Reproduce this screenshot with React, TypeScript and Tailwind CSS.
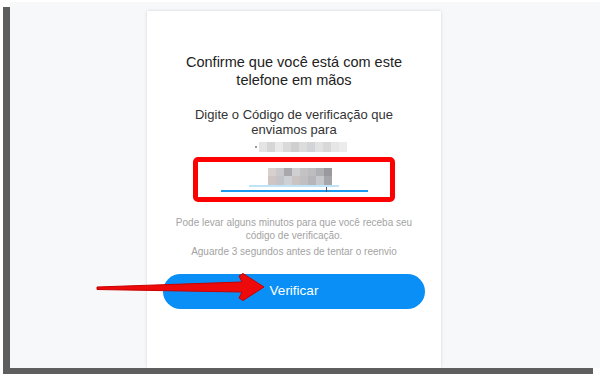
const phoneShades = ["#e4e4e4", "#d6d6d6", "#e9e9e9", "#dadada", "#cfcfcf", "#dcdcdc", "#d2d4d8", "#e2e2e2", "#d8d8d8", "#e6e6e6", "#ececec"];
const codeTop = ["#d8cfcf", "#c9c9cc", "#a9a9ad", "#cfcfd2", "#c3c3c6", "#bdbdc0", "#aeb0b4", "#9a9a9e"];
const codeBottom = ["#cfc6c4", "#c4c4c8", "#cdd0d4", "#c9c3c1", "#c0c0c3", "#b6b6ba", "#c6c8cc", "#a5a6aa"];

const Pixels = ({ shades, size }: { shades: string[]; size: string }) => (
  <div className="flex">
    {shades.map((c, i) => (
      <div key={i} className={size} style={{ backgroundColor: c }} />
    ))}
  </div>
);

export default function App() {
  return (
    <div className="relative w-[600px] h-[374px] bg-white flex flex-col font-['Liberation_Sans',Arial,sans-serif] overflow-hidden">
      <div className="flex-1 flex pt-[2px]">
        <div className="w-[3px]" />
        <div className="w-[7px] mt-[5px] bg-[#5e5e5e]" />
        <div className="flex-1 bg-[#f7f8fa] flex">
          <div className="ml-[137px] mt-[9px] w-[294px] bg-white shadow-[0_0_3px_rgba(0,0,0,0.15)] flex flex-col items-center">
            <div className="mt-[42px] text-[14.5px] leading-[18px] text-[#222] text-center">
              Confirme que você está com este
              <br />
              telefone em mãos
            </div>
            <div className="mt-[18px] text-[13px] leading-[15px] text-[#333] text-center">
              Digite o Código de verificação que
              <br />
              enviamos para
            </div>
            <div className="mt-[5px] ml-[14px] flex items-center">
              <div className="w-[2px] h-[2px] bg-[#999] mr-[2px]" />
              <Pixels shades={phoneShades} size="w-[8px] h-[10px]" />
            </div>
            <div className="mt-[5px] w-[202px] h-[45px] border-[5px] border-[#ff0000] rounded-[5px] flex flex-col items-center">
              <div className="mt-[6px] ml-[12px] flex flex-col">
                <Pixels shades={codeTop} size="w-[8px] h-[8px]" />
                <Pixels shades={codeBottom} size="w-[8px] h-[9px]" />
              </div>
              <div className="w-[90px] h-[2px] bg-[#bfe3f8]" />
              <div className="relative mt-[3px] w-[147px] h-[2px] bg-[#1a9bf0]">
                <div className="absolute left-[105px] -top-[3px] w-[1px] h-[5px] bg-[#555]" />
              </div>
            </div>
            <div className="mt-[14px] text-[10px] leading-[13px] text-[#a3a3a3] text-center">
              Pode levar alguns minutos para que você receba seu
              <br />
              código de verificação.
            </div>
            <div className="mt-[3px] text-[10px] leading-[13px] text-[#a3a3a3] text-center">
              Aguarde 3 segundos antes de tentar o reenvio
            </div>
            <button className="mt-[16px] w-[262px] h-[35px] rounded-full bg-[#0a8ff7] text-white text-[13.5px] flex items-center justify-center">
              Verificar
            </button>
          </div>
        </div>
      </div>
      <div className="h-[6px] ml-[3px] mr-[7px] bg-[#5e5e5e]" />
      <svg className="absolute left-0 top-0" width="600" height="374" viewBox="0 0 600 374">
        <polygon
          points="97,287 97,289.5 242,292 239,298 243,300.5 264,287 243,273.5 239,276 242,282"
          fill="#ee0a0a"
          stroke="#c80000"
          strokeWidth="1"
          strokeLinejoin="round"
        />
      </svg>
    </div>
  );
}
